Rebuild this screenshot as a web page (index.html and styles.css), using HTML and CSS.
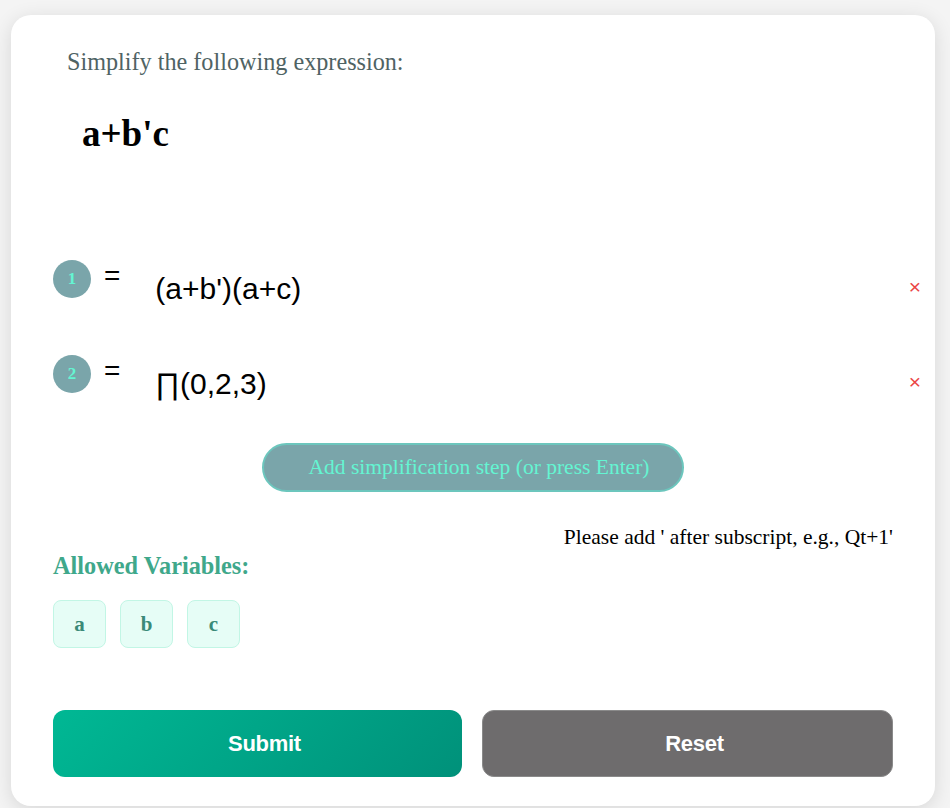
FILE: index.html
```html
<!DOCTYPE html>
<html>
<head>
<meta charset="utf-8">
<link rel="stylesheet" href="styles.css">
</head>
<body>
<div class="card">
  <p class="prompt">Simplify the following expression:</p>
  <div class="expr">a+b'c</div>

  <div class="steps">
    <div class="step">
      <span class="num">1</span>
      <span class="eq">=</span>
      <span class="step-expr">(a+b')(a+c)</span>
      <span class="del">×</span>
    </div>
    <div class="step">
      <span class="num">2</span>
      <span class="eq">=</span>
      <span class="step-expr">∏(0,2,3)</span>
      <span class="del">×</span>
    </div>
  </div>

  <div class="add-wrap">
    <button class="add">Add simplification step (or press Enter)</button>
  </div>

  <div class="hint">Please add ' after subscript, e.g., Qt+1'</div>

  <div class="vars-title">Allowed Variables:</div>
  <div class="vars">
    <span class="var">a</span>
    <span class="var">b</span>
    <span class="var">c</span>
  </div>

  <div class="actions">
    <button class="btn submit">Submit</button>
    <button class="btn reset">Reset</button>
  </div>
</div>
</body>
</html>
```
FILE: styles.css
```css
html, body {
  margin: 0;
  padding: 0;
  background: #f4f4f4;
  font-family: "Liberation Serif", "Times New Roman", serif;
}
body {
  padding: 15px 15px 0 11px;
  height: 808px;
  box-sizing: border-box;
  overflow: hidden;
}
.card {
  width: 924px;
  height: 791px;
  box-sizing: border-box;
  background: #fff;
  border-radius: 20px;
  box-shadow: 0 4px 20px rgba(0, 0, 0, 0.12);
  padding: 33px 42px 0 42px;
}
.prompt {
  margin: 0 0 0 14px;
  font-size: 24.2px;
  line-height: 28px;
  color: #4f6364;
}
.expr {
  margin: 37px 0 0 29px;
  font-size: 37px;
  font-weight: bold;
  line-height: 42px;
  color: #000;
}
.steps {
  margin-top: 105px;
}
.step {
  display: flex;
  align-items: flex-start;
  height: 95px;
}
.num {
  width: 38px;
  height: 38px;
  border-radius: 50%;
  background: #7aa5aa;
  color: #64f5d2;
  font-weight: bold;
  font-size: 17px;
  display: flex;
  align-items: center;
  justify-content: center;
  flex: none;
}
.eq {
  margin-left: 13px;
  font-family: "Liberation Sans", Arial, sans-serif;
  font-size: 28px;
  line-height: 28px;
  margin-top: 2px;
  color: #000;
}
.step-expr {
  margin-left: 35px;
  margin-top: 13px;
  font-family: "Liberation Sans", Arial, sans-serif;
  font-size: 30px;
  line-height: 32px;
  color: #000;
  flex: 1;
}
.del {
  margin-top: 14px;
  font-family: "Liberation Sans", Arial, sans-serif;
  color: #eb4545;
  font-size: 21px;
  line-height: 26px;
  margin-right: -28px;
}
.add-wrap {
  display: flex;
  justify-content: center;
  margin-top: -7px;
}
.add {
  width: 422px;
  height: 49px;
  border-radius: 25px;
  background: #7aa5aa;
  border: 2px solid #6cc6bd;
  color: #64f5d2;
  font-family: "Liberation Serif", "Times New Roman", serif;
  font-size: 21.5px;
  padding: 0 0 0 12px;
}
.hint {
  text-align: right;
  margin-top: 33px;
  font-size: 21.5px;
  line-height: 25px;
  color: #000;
}
.vars-title {
  margin-top: 2px;
  font-size: 24.3px;
  font-weight: bold;
  color: #3fa88b;
  line-height: 28px;
}
.vars {
  display: flex;
  gap: 14px;
  margin-top: 20px;
}
.var {
  width: 53px;
  height: 48px;
  box-sizing: border-box;
  background: #e6fdf6;
  border: 1px solid #c2f6e5;
  border-radius: 8px;
  display: flex;
  align-items: center;
  justify-content: center;
  font-size: 21px;
  font-weight: bold;
  color: #3a8a78;
}
.actions {
  display: flex;
  gap: 20px;
  margin-top: 62px;
}
.btn {
  flex: 1;
  height: 67px;
  border-radius: 12px;
  font-family: "Liberation Sans", Arial, sans-serif;
  font-size: 22px;
  letter-spacing: -0.3px;
  font-weight: bold;
  color: #fff;
  padding: 0 0 0 14px;
}
.submit {
  background: linear-gradient(135deg, #00b894, #00917a);
  border: none;
}
.reset {
  background: #6e6c6d;
  border: 1px solid #8a8a8a;
}
```
